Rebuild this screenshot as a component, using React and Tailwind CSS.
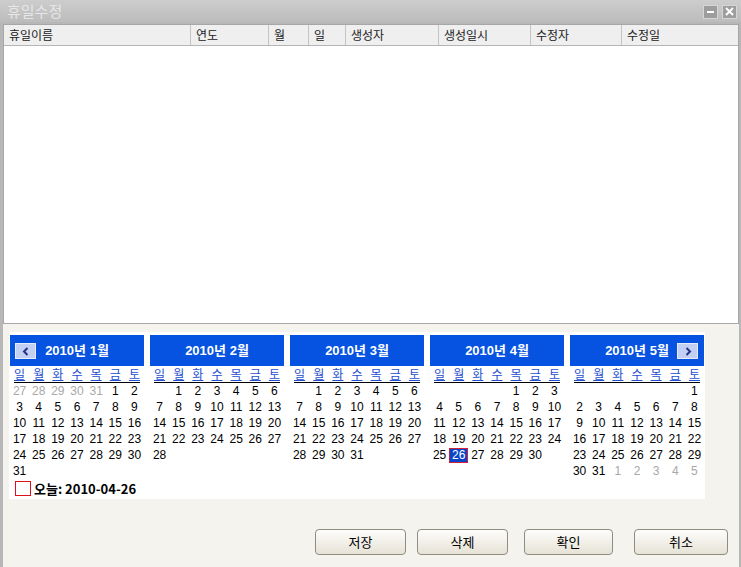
const font = { fontFamily: '"Liberation Sans", "Noto Sans CJK KR", sans-serif' };

const columns = [
  { label: "휴일이름", w: "w-[187px]" },
  { label: "연도", w: "w-[78px]" },
  { label: "월", w: "w-[40px]" },
  { label: "일", w: "w-[37px]" },
  { label: "생성자", w: "w-[93px]" },
  { label: "생성일시", w: "w-[92px]" },
  { label: "수정자", w: "w-[91px]" },
  { label: "수정일", w: "flex-1" },
];

const dows = ["일", "월", "화", "수", "목", "금", "토"];

// month: first weekday, days, prev month length
const months = [
  { m: 1, start: 5, days: 31, prev: 31, nav: "prev" },
  { m: 2, start: 1, days: 28, prev: 31 },
  { m: 3, start: 1, days: 31, prev: 28 },
  { m: 4, start: 4, days: 30, prev: 31 },
  { m: 5, start: 6, days: 31, prev: 30, nav: "next" },
];

function cellsFor({ m, start, days, prev }) {
  const cells = [];
  // only January and May show days of other months
  for (let i = 0; i < start; i++) {
    cells.push(m === 1 ? { d: prev - start + 1 + i, other: true } : null);
  }
  for (let d = 1; d <= days; d++) cells.push({ d });
  if (m === 5) {
    let n = 1;
    while (cells.length % 7 !== 0) cells.push({ d: n++, other: true });
  }
  return cells;
}

function Month(props) {
  const cells = cellsFor(props);
  return (
    <div className="w-[134px] flex flex-col">
      <div className="relative h-[31px] bg-[#0553e0] flex items-center justify-center">
        {props.nav === "prev" && (
          <div className="absolute left-[5px] top-[8px] w-[21px] h-[16px] bg-[#c3d0f4] border border-[#e6ecfb] flex items-center justify-center">
            <svg width="8" height="9" viewBox="0 0 8 9">
              <path d="M5.5 1 L2 4.5 L5.5 8" stroke="#23338a" strokeWidth="2" fill="none" />
            </svg>
          </div>
        )}
        {props.nav === "next" && (
          <div className="absolute right-[6px] top-[8px] w-[21px] h-[16px] bg-[#c3d0f4] border border-[#e6ecfb] flex items-center justify-center">
            <svg width="8" height="9" viewBox="0 0 8 9">
              <path d="M2.5 1 L6 4.5 L2.5 8" stroke="#23338a" strokeWidth="2" fill="none" />
            </svg>
          </div>
        )}
        <span className="text-white font-bold text-[13px]" style={font}>
          2010년 {props.m}월
        </span>
      </div>
      <div className="grid grid-cols-7 h-[16px] items-end">
        {dows.map((d) => (
          <span key={d} className="text-center text-[12px] leading-[14px] text-[#1f4fd0] underline" style={font}>
            {d}
          </span>
        ))}
      </div>
      <div className="h-px bg-black mx-[4px]" />
      <div className="grid grid-cols-7">
        {cells.map((c, i) => {
          if (!c) return <span key={i} className="h-[16px]" />;
          const sel = props.m === 4 && c.d === 26 && !c.other;
          return (
            <span
              key={i}
              className={
                "h-[16px] flex items-center justify-center text-[12px] " +
                (c.other ? "text-[#a8a8a8]" : sel ? "" : "text-black")
              }
              style={font}
            >
              {sel ? (
                <span className="w-[19px] h-[15px] bg-[#0a45c8] border border-[#d0203a] text-white flex items-center justify-center">
                  {c.d}
                </span>
              ) : (
                c.d
              )}
            </span>
          );
        })}
      </div>
    </div>
  );
}

function Button({ label, w, ml }) {
  return (
    <button
      className={`${w} ${ml} h-[26px] rounded-[4px] border border-[#8f8c80] bg-gradient-to-b from-[#fdfdfb] to-[#e6e2d6] text-[13px] text-black`}
      style={{ fontFamily: '"Noto Sans CJK KR", sans-serif' }}
    >
      {label}
    </button>
  );
}

export default function App() {
  return (
    <div className="w-[741px] h-[567px] bg-[#b7b7b7] flex flex-col overflow-hidden">
      {/* title bar */}
      <div className="h-[22px] bg-gradient-to-b from-[#cdcdcd] to-[#bcbcbc] flex items-center pl-[7px] pr-[4px]">
        <span className="text-[15px] text-[#e6e6e6]" style={{ fontFamily: '"Noto Sans CJK KR", sans-serif' }}>
          휴일수정
        </span>
        <div className="ml-auto flex gap-[4px] mt-[1px]">
          <div className="w-[15px] h-[14px] bg-[#9d9d9d] border border-[#d6d6d6] flex items-center justify-center">
            <div className="w-[7px] h-[2px] bg-white" />
          </div>
          <div className="w-[15px] h-[14px] bg-[#9d9d9d] border border-[#d6d6d6] flex items-center justify-center">
            <svg width="9" height="9" viewBox="0 0 9 9">
              <path d="M1 1 L8 8 M8 1 L1 8" stroke="white" strokeWidth="2" />
            </svg>
          </div>
        </div>
      </div>

      <div className="flex-1 flex flex-col pl-[3px] pr-[2px] pt-[2px]">
        {/* table */}
        <div className="h-[300px] bg-white border border-[#a7a7a7] flex flex-col">
          <div className="h-[21px] bg-[#efefef] border-b border-[#b5b5b5] flex">
            {columns.map((c, i) => (
              <div
                key={c.label}
                className={`${c.w} h-full flex items-center pl-[5px] text-[12px] text-[#222] ${
                  i < columns.length - 1 ? "border-r border-[#c4c4c4]" : ""
                }`}
                style={{ fontFamily: '"Noto Sans CJK KR", sans-serif' }}
              >
                {c.label}
              </div>
            ))}
          </div>
        </div>

        {/* lower panel */}
        <div className="flex-1 bg-[#f4f3ee] flex flex-col">
          <div className="ml-[6px] mt-[8px] w-[696px] h-[167px] bg-white pl-[1px] pt-[3px] flex flex-col">
            <div className="flex gap-[6px]">
              {months.map((mo) => (
                <Month key={mo.m} {...mo} />
              ))}
            </div>
            <div className="flex items-center ml-[5px] gap-[3px]">
              <div className="w-[16px] h-[15px] border border-[#e0101a]" />
              <span className="text-[13px] font-bold text-black" style={{ fontFamily: '"Noto Sans CJK KR", sans-serif' }}>
                오늘: 2010-04-26
              </span>
            </div>
          </div>

          <div className="flex mt-[30px]">
            <Button label="저장" w="w-[91px]" ml="ml-[312px]" />
            <Button label="삭제" w="w-[91px]" ml="ml-[11px]" />
            <Button label="확인" w="w-[89px]" ml="ml-[16px]" />
            <Button label="취소" w="w-[94px]" ml="ml-[21px]" />
          </div>
        </div>
      </div>
    </div>
  );
}
